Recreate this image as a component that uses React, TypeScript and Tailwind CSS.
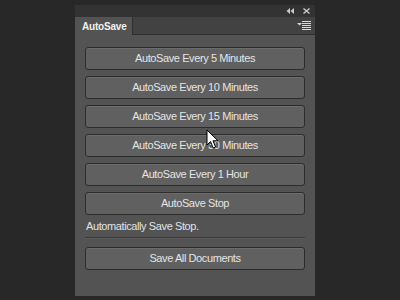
const BUTTONS = [
  "AutoSave Every 5 Minutes",
  "AutoSave Every 10 Minutes",
  "AutoSave Every 15 Minutes",
  "AutoSave Every 30 Minutes",
  "AutoSave Every 1 Hour",
  "AutoSave Stop",
];

const font = { fontFamily: '"Liberation Sans", Arial, sans-serif' };

function PanelButton({ label }: { label: string }) {
  return (
    <button
      type="button"
      className="h-[23px] w-full rounded-[3px] border border-[#2c2c2c] bg-[#606060] text-[11px] tracking-[-0.4px] text-[#e4e4e4] shadow-[inset_0_1px_0_rgba(255,255,255,0.08)]"
    >
      {label}
    </button>
  );
}

export default function App() {
  return (
    <div className="relative h-[300px] w-[400px] overflow-hidden bg-[#282828] pt-[5px]" style={font}>
      <div className="ml-[75px] flex h-[291px] w-[240px] flex-col overflow-hidden rounded-t-[3px] bg-[#535353]">
        {/* title bar */}
        <div className="flex h-[12px] items-center justify-end gap-[9px] bg-[#333333] pr-[5px]">
          <svg width="8" height="6" viewBox="0 0 8 6" className="text-[#c8c8c8]">
            <path d="M4 0 L0.5 3 L4 6 Z M8 0 L4.5 3 L8 6 Z" fill="currentColor" />
          </svg>
          <svg width="7" height="6" viewBox="0 0 7 6" className="text-[#c8c8c8]">
            <path d="M0.5 0.5 L6.5 5.5 M6.5 0.5 L0.5 5.5" stroke="currentColor" strokeWidth="1.4" />
          </svg>
        </div>

        {/* tab row */}
        <div className="flex h-[18px] bg-[#424242]">
          <div className="flex w-[58px] items-center border-r border-[#2f2f2f] bg-[#535353] pl-[7px] text-[10px] font-bold tracking-[-0.2px] text-[#f0f0f0]">
            AutoSave
          </div>
          <div className="flex flex-1 items-center justify-end border-b border-[#2f2f2f] pr-[4px]">
            <svg width="14" height="9" viewBox="0 0 14 9" className="text-[#d8d8d8]">
              <path d="M0 2 L5 2 L2.5 4.5 Z" fill="currentColor" />
              <path d="M5 0.5 H14 M5 2.5 H14 M5 4.5 H14 M5 6.5 H14 M5 8.5 H14" stroke="currentColor" strokeWidth="1" />
            </svg>
          </div>
        </div>

        {/* content */}
        <div className="flex flex-col px-[10px] pt-[12px]">
          <div className="flex flex-col gap-[6px]">
            {BUTTONS.map((b) => (
              <PanelButton key={b} label={b} />
            ))}
          </div>
          <div className="mt-[4px] h-[14px] pl-[1px] text-[11px] leading-[14px] tracking-[-0.4px] text-[#dfe3ea]">
            Automatically Save Stop.
          </div>
          <div className="mt-[4px] h-px bg-[#3a3a3a]" />
          <div className="h-px bg-[#5c5c5c]" />
          <div className="mt-[6px]">
            <PanelButton label="Save All Documents" />
          </div>
        </div>
      </div>

      {/* mouse pointer */}
      <svg
        width="13"
        height="21"
        viewBox="0 0 13 21"
        className="absolute left-[206px] top-[129px]"
      >
        <path
          d="M1 1 L1 16 L4.5 12.5 L7.2 19 L9.6 18 L7 11.8 L12 11.8 Z"
          fill="#ffffff"
          stroke="#000000"
          strokeWidth="1"
          strokeLinejoin="miter"
        />
      </svg>
    </div>
  );
}
